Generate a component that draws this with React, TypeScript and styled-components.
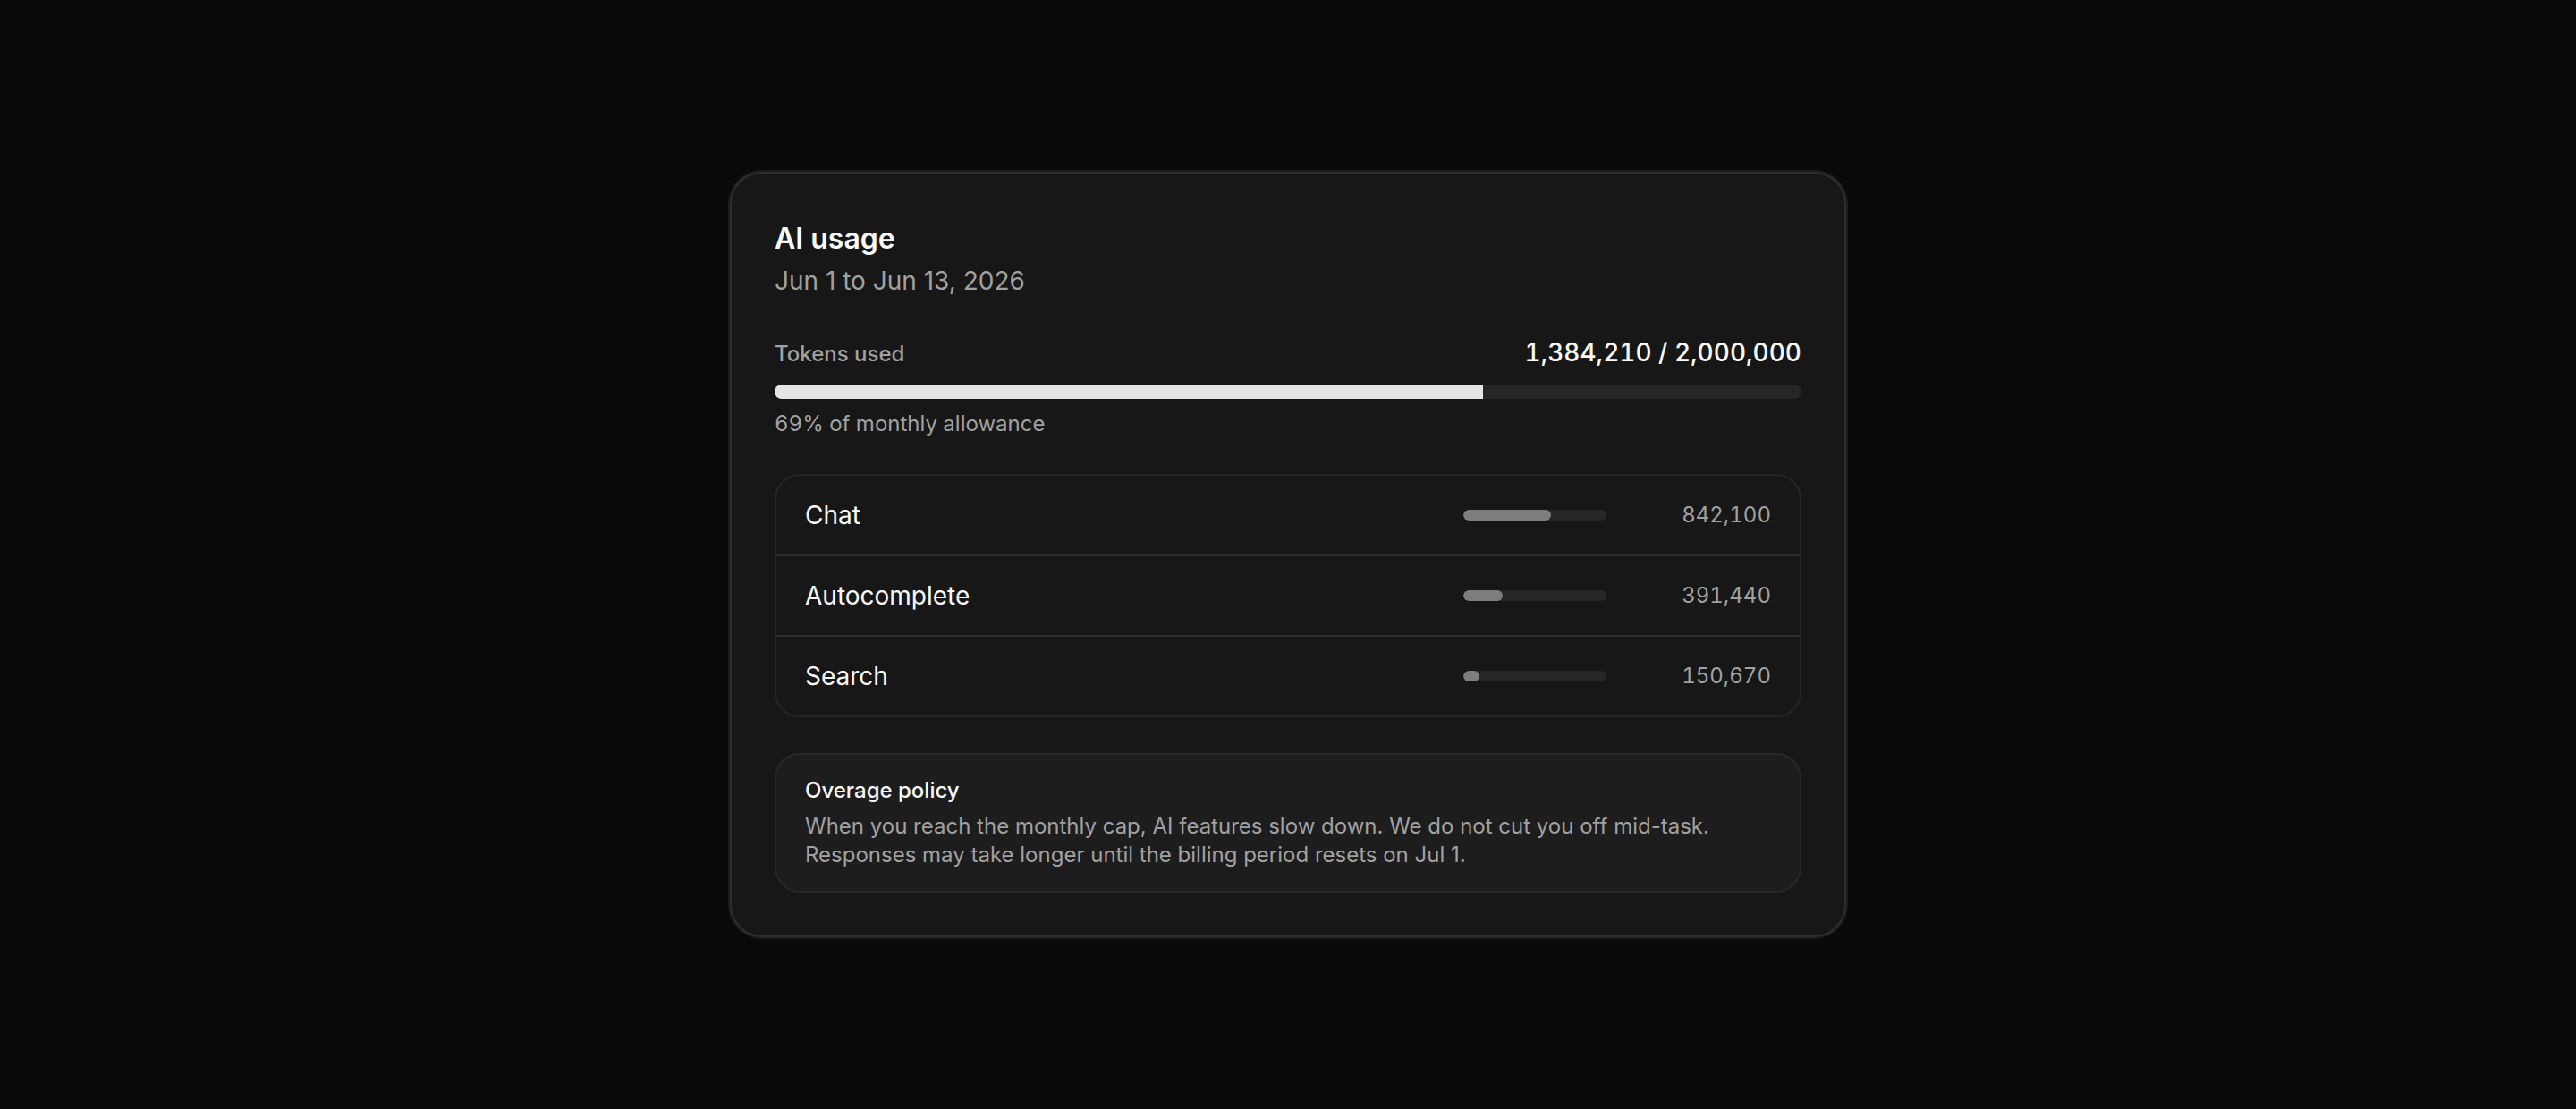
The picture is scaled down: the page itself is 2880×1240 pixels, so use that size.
import styled, { createGlobalStyle } from 'styled-components';

type Feature = {
  name: string;
  tokens: number;
};

const TOKENS_USED = 1384210;
const TOKENS_LIMIT = 2000000;
const MINI_TRACK_WIDTH = 160;

const features: Feature[] = [
  { name: 'Chat', tokens: 842100 },
  { name: 'Autocomplete', tokens: 391440 },
  { name: 'Search', tokens: 150670 },
];

const formatNumber = (value: number) => value.toLocaleString('en-US');
const toPercent = (value: number, total: number) => Math.round((value / total) * 100);

const miniFillWidth = (tokens: number) =>
  Math.round((MINI_TRACK_WIDTH * toPercent(tokens, TOKENS_USED)) / 200) * 2;

export default function App() {
  const usedPercent = toPercent(TOKENS_USED, TOKENS_LIMIT);

  return (
    <>
      <GlobalStyle />
      <Page>
        <Card>
          <Header>
            <Title>AI usage</Title>
            <Period>Jun 1 to Jun 13, 2026</Period>
          </Header>

          <Summary>
            <SummaryTop>
              <SummaryLabel>Tokens used</SummaryLabel>
              <SummaryValue>
                {formatNumber(TOKENS_USED)} / {formatNumber(TOKENS_LIMIT)}
              </SummaryValue>
            </SummaryTop>
            <Track>
              <TrackFill style={{ width: `${usedPercent}%` }} />
            </Track>
            <SummaryNote>{usedPercent}% of monthly allowance</SummaryNote>
          </Summary>

          <FeatureList>
            {features.map(({ name, tokens }) => (
              <FeatureRow key={name}>
                <FeatureName>{name}</FeatureName>
                <MiniTrack>
                  <MiniFill style={{ width: miniFillWidth(tokens) }} />
                </MiniTrack>
                <FeatureValue>{formatNumber(tokens)}</FeatureValue>
              </FeatureRow>
            ))}
          </FeatureList>

          <Policy>
            <PolicyTitle>Overage policy</PolicyTitle>
            <PolicyText>
              When you reach the monthly cap, AI features slow down. We do not cut you off mid-task.
              Responses may take longer until the billing period resets on Jul 1.
            </PolicyText>
          </Policy>
        </Card>
      </Page>
    </>
  );
}

const GlobalStyle = createGlobalStyle`
  * {
    box-sizing: border-box;
    margin: 0;
    padding: 0;
  }

  body {
    background: #0a0a0a;
    color: #fafafa;
    font-family: Inter, sans-serif;
  }
`;

const Page = styled.main`
  display: flex;
  align-items: center;
  justify-content: center;
  min-height: 100vh;
`;

const Card = styled.section`
  display: flex;
  flex-direction: column;
  gap: 40px;
  width: 1248px;
  padding: 48px;
  background: #171717;
  border: 2px solid #2e2e2e;
  border-radius: 36px;
  box-shadow: 0 0 0 2px #1c1c1c;
`;

const Header = styled.header`
  display: flex;
  flex-direction: column;
  gap: 2px;
`;

const Title = styled.h2`
  font-size: 32px;
  font-weight: 600;
  line-height: 50px;
`;

const Period = styled.p`
  color: #a1a1a1;
  font-size: 28px;
  line-height: 40px;
`;

const Summary = styled.div`
  display: flex;
  flex-direction: column;
`;

const SummaryTop = styled.div`
  display: flex;
  align-items: baseline;
  justify-content: space-between;
  margin-bottom: 16px;
`;

const SummaryLabel = styled.span`
  color: #a1a1a1;
  font-size: 24px;
  font-weight: 500;
  line-height: 32px;
`;

const SummaryValue = styled.span`
  font-size: 28px;
  font-weight: 500;
  line-height: 40px;
  font-variant-numeric: tabular-nums;
`;

const Track = styled.div`
  height: 16px;
  background: #262626;
  border-radius: 8px;
  overflow: hidden;
`;

const TrackFill = styled.div`
  height: 100%;
  background: #e5e5e5;
`;

const SummaryNote = styled.p`
  margin-top: 12px;
  color: #a1a1a1;
  font-size: 24px;
  line-height: 32px;
  font-variant-numeric: tabular-nums;
`;

const FeatureList = styled.ul`
  list-style: none;
  border: 2px solid #262626;
  border-radius: 28px;
`;

const FeatureRow = styled.li`
  display: flex;
  align-items: center;
  height: 88px;
  padding: 0 32px;

  & + & {
    height: 90px;
    border-top: 2px solid #2e2e2e;
  }
`;

const FeatureName = styled.span`
  flex: 1;
  font-size: 28px;
  line-height: 40px;
`;

const MiniTrack = styled.div`
  width: ${MINI_TRACK_WIDTH}px;
  height: 12px;
  background: #262626;
  border-radius: 6px;
  overflow: hidden;
`;

const MiniFill = styled.div`
  height: 100%;
  background: #7d7d7d;
  border-radius: 6px;
`;

const FeatureValue = styled.span`
  width: 184px;
  color: #a1a1a1;
  font-size: 24px;
  line-height: 32px;
  font-variant-numeric: tabular-nums;
  text-align: right;
`;

const Policy = styled.div`
  display: flex;
  flex-direction: column;
  gap: 8px;
  padding: 24px 32px;
  background: #1d1d1d;
  border: 2px solid #282828;
  border-radius: 28px;
`;

const PolicyTitle = styled.h3`
  font-size: 24px;
  font-weight: 500;
  line-height: 32px;
`;

const PolicyText = styled.p`
  color: #a1a1a1;
  font-size: 24px;
  line-height: 32px;
`;
